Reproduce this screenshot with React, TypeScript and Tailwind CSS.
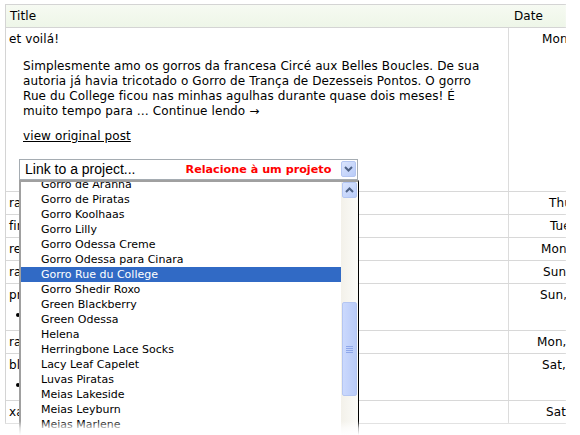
import React from "react";

const items = [
  "Gorro de Aranha",
  "Gorro de Piratas",
  "Gorro Koolhaas",
  "Gorro Lilly",
  "Gorro Odessa Creme",
  "Gorro Odessa para Cinara",
  "Gorro Rue du College",
  "Gorro Shedir Roxo",
  "Green Blackberry",
  "Green Odessa",
  "Helena",
  "Herringbone Lace Socks",
  "Lacy Leaf Capelet",
  "Luvas Piratas",
  "Meias Lakeside",
  "Meias Leyburn",
  "Meias Marlene",
];

const rows = [
  { t: "raglan", d: "Thu, 12 Nov", pl: 40, bullet: false },
  { t: "finished", d: "Tue, 10 Nov", pl: 41, bullet: false },
  { t: "receitas", d: "Mon, 31 Oct", pl: 32, bullet: false },
  { t: "ravelry", d: "Sun, 30 Oct", pl: 34, bullet: false },
  { t: "projetos", d: "Sun, 23 Oct", pl: 31, bullet: true },
  { t: "random", d: "Mon, 17 Oct", pl: 28, bullet: false },
  { t: "blog", d: "Sat, 15 Oct", pl: 33, bullet: true },
  { t: "xales", d: "Sat  8 Oct", pl: 37, bullet: false },
];

function Chevron({ up }: { up?: boolean }) {
  return (
    <svg width="9" height="6" viewBox="0 0 9 6">
      <path
        d={up ? "M1 5 L4.5 1.5 L8 5" : "M1 1 L4.5 4.5 L8 1"}
        fill="none"
        stroke="#4d6185"
        strokeWidth="2"
      />
    </svg>
  );
}

function XPButton({ up }: { up?: boolean }) {
  return (
    <div className="w-[15px] h-[16px] rounded-[2px] border border-[#b4c6f2] bg-gradient-to-br from-[#dbe5fd] to-[#b8cbf8] flex items-center justify-center">
      <Chevron up={up} />
    </div>
  );
}

export default function App() {
  return (
    <div className="relative w-[580px] h-[435px] overflow-hidden bg-white text-black font-['DejaVu_Sans',sans-serif] text-[12px] leading-[15px]">
      <div className="mt-[4px] ml-[5px] w-[561px] border-t border-l border-[#d4d4d4] tracking-[0.1px]">
        {/* header */}
        <div className="flex h-[23px] border-b border-[#d4d4d4] bg-gradient-to-b from-[#f6faf2] to-[#eef6e8]">
          <div className="w-[502px] pl-[4px] pt-[4px]">Title</div>
          <div className="flex-1 pl-[6px] pt-[4px]">Date</div>
        </div>
        {/* row 1 */}
        <div className="flex h-[164px] border-b border-[#d8d8d8]">
          <div className="w-[502px] pl-[3px] pt-[4px]">
            <div>et voilá!</div>
            <div className="mt-[12px] ml-[14px] whitespace-nowrap">
              Simplesmente amo os gorros da francesa Circé aux Belles Boucles. De sua
              <br />
              autoria já havia tricotado o Gorro de Trança de Dezesseis Pontos. O gorro
              <br />
              Rue du College ficou nas minhas agulhas durante quase dois meses! É
              <br />
              muito tempo para … Continue lendo →
            </div>
            <div className="mt-[10px] ml-[14px] underline">view original post</div>
            <div className="relative mt-[15px] ml-[10px] w-[339px] h-[21px] border border-[#a5acb2] flex items-center tracking-normal">
              <span className="pl-[5px] text-[14px] font-['Liberation_Sans',sans-serif]">Link to a project...</span>
              <span className="ml-[50px] text-[#ff0000] font-bold text-[11.2px]">Relacione à um projeto</span>
              <div className="absolute right-[1px] top-[1px]">
                <XPButton />
              </div>
              {/* dropdown list */}
              <div className="absolute left-[-1px] top-[20px] w-[340px] h-[260px] bg-white border-t-2 border-l-2 border-[#a0a0a0] border-r border-r-black flex overflow-hidden z-10">
                <div className="flex-1 overflow-hidden">
                  <div className="mt-[-5px] font-['DejaVu_Sans',sans-serif] text-[11px] leading-[15px]">
                    {items.map((it) => (
                      <div
                        key={it}
                        className={
                          "h-[15px] pl-[20px] whitespace-nowrap " +
                          (it === "Gorro Rue du College" ? "bg-[#316ac5] text-white" : "")
                        }
                      >
                        {it}
                      </div>
                    ))}
                  </div>
                </div>
                <div className="w-[17px] bg-gradient-to-r from-[#f3f1ea] to-[#fbfbf8] flex flex-col items-center">
                  <div className="mt-0">
                    <XPButton up />
                  </div>
                  <div className="mt-[104px] w-[15px] h-[94px] rounded-[2px] border border-[#b4c6f2] bg-gradient-to-r from-[#cbd9fd] to-[#b9cbf8] flex flex-col items-center justify-center gap-[1px]">
                    <div className="w-[7px] h-[1px] bg-[#8ea7ea]" />
                    <div className="w-[7px] h-[1px] bg-[#8ea7ea]" />
                    <div className="w-[7px] h-[1px] bg-[#8ea7ea]" />
                    <div className="w-[7px] h-[1px] bg-[#8ea7ea]" />
                  </div>
                </div>
              </div>
            </div>
          </div>
          <div className="flex-1 border-l border-[#dcdcdc] pl-[33px] pt-[4px] whitespace-nowrap overflow-hidden">
            Mon, 23 Nov
          </div>
        </div>
        {rows.map((r) => (
          <div
            key={r.t}
            className={"flex border-b border-[#d8d8d8] " + (r.bullet ? "h-[47px]" : "h-[23px]")}
          >
            <div className="w-[502px] pl-[3px] pt-[4px] whitespace-nowrap overflow-hidden">
              <div>{r.t}</div>
              {r.bullet && (
                <ul className="list-disc ml-[21px] mt-[4px]">
                  <li>item</li>
                </ul>
              )}
            </div>
            <div
              className="flex-1 border-l border-[#dcdcdc] pt-[4px] whitespace-nowrap overflow-hidden"
              style={{ paddingLeft: r.pl }}
            >
              {r.d}
            </div>
          </div>
        ))}
      </div>
      {/* torn edges */}
      <div className="absolute left-0 right-0 bottom-0 h-[14px] bg-gradient-to-b from-white/0 via-white/70 to-white z-20" />
      <div className="absolute top-0 bottom-0 right-0 w-[16px] bg-gradient-to-r from-white/0 via-white/80 to-white z-20" />
    </div>
  );
}
